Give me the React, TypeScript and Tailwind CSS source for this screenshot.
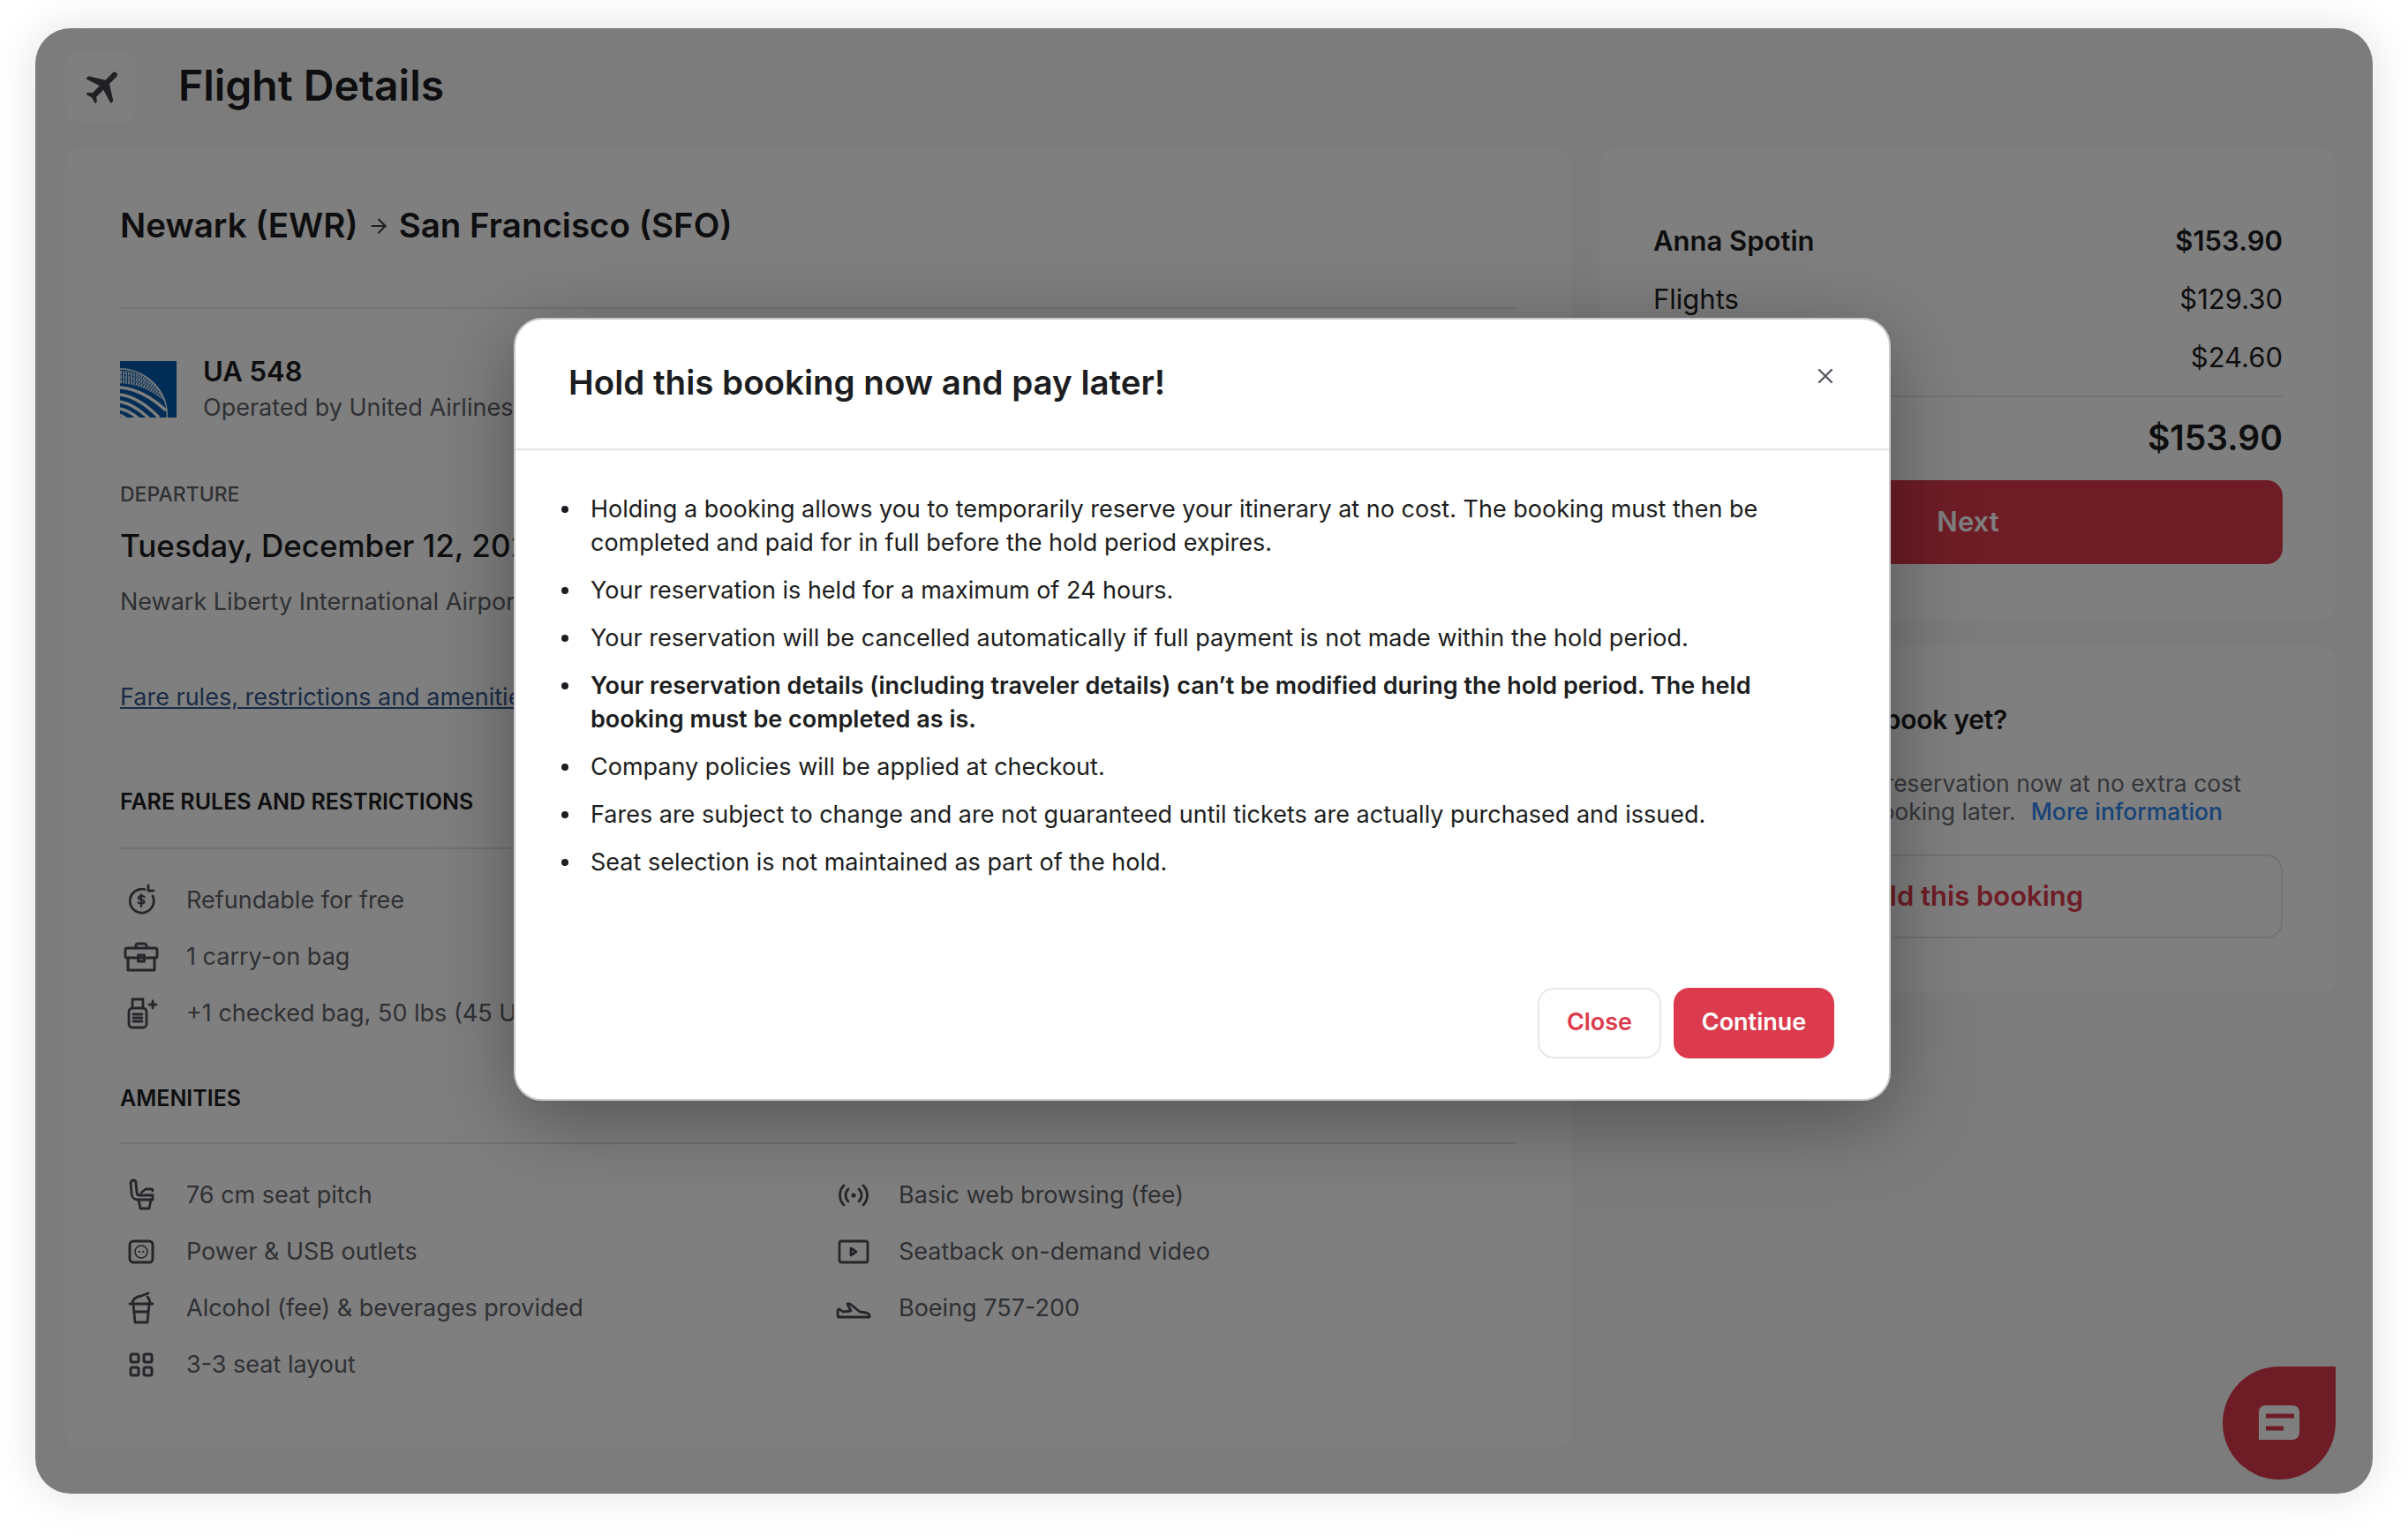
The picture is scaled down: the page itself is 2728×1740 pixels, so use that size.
import React from 'react';
import { ArrowRight, X } from 'lucide-react';
import { MdFlight } from 'react-icons/md';

const iconProps = {
  width: 40,
  height: 40,
  viewBox: '0 0 40 40',
  fill: 'none',
  stroke: '#4a4d55',
  strokeWidth: 2.8,
  strokeLinecap: 'round' as const,
  strokeLinejoin: 'round' as const,
};

const RefundIcon = () => (
  <svg {...iconProps}>
    <path d="M24 7.500A13.500 13.500 0 1 0 33 15" />
    <path d="M28 3v6h6" />
    <path d="M23.500 16c-1-1.500-6-2-6.500.8-.4 3 7 1.700 6.500 5-.5 2.500-5.500 2.200-7 .5M20 13v14" strokeWidth={2.2} />
  </svg>
);

const BriefcaseIcon = () => (
  <svg {...iconProps} strokeWidth={3}>
    <path d="M14 10V7.500A2.500 2.500 0 0 1 16.500 5h7A2.500 2.500 0 0 1 26 7.500V10" />
    <rect x="2" y="10" width="36" height="11" rx="2" />
    <path d="M5 21v14h30V21" />
    <rect x="16.500" y="18" width="7" height="7" />
  </svg>
);

const CheckedBagIcon = () => (
  <svg {...iconProps}>
    <path d="M10 14V4h12v10" />
    <rect x="6" y="14" width="20" height="22" rx="4" />
    <path d="M11 21h10M11 25h10M11 29h10M33 6v8M29 10h8" />
  </svg>
);

const SeatIcon = () => (
  <svg {...iconProps}>
    <path d="M8 6c0-4 6-4 6 0l1 11c.2 2 1 3 3 3h14" />
    <path d="M8 6l1 12c.3 4 3 7 7 7h17v-5" />
    <path d="M20 17l5-4h6c1.500 0 2 1 2 2M17 25l2 10h10l2-10" />
  </svg>
);

const OutletIcon = () => (
  <svg {...iconProps} strokeWidth={3}>
    <rect x="7" y="8" width="26" height="24" rx="4" />
    <circle cx="20" cy="20" r="7" strokeWidth={1.600} />
    <path d="M17.500 20h.5M22 20h.5" strokeWidth={2} />
  </svg>
);

const CupIcon = () => (
  <svg {...iconProps}>
    <path d="M10 15c0-5 4-8 10-9l8-3" />
    <path d="M7 15h26M11 15l2 21h14l2-21M12 24h16M30 15c0-3-1-6-3-8" />
  </svg>
);

const GridIcon = () => (
  <svg {...iconProps} strokeWidth={3}>
    <rect x="8" y="8" width="9" height="9" rx="2" />
    <rect x="23" y="8" width="9" height="9" rx="2" />
    <rect x="8" y="23" width="9" height="9" rx="2" />
    <rect x="23" y="23" width="9" height="9" rx="2" />
  </svg>
);

const WifiIcon = () => (
  <svg {...iconProps}>
    <path d="M9 9c-6 6-6 16 0 22M31 9c6 6 6 16 0 22M14 13c-4 4-4 10 0 14M26 13c4 4 4 10 0 14" />
    <circle cx="20" cy="20" r="1.200" fill="#4a4d55" />
  </svg>
);

const VideoIcon = () => (
  <svg {...iconProps}>
    <rect x="4" y="8" width="32" height="24" rx="2.500" />
    <path d="M17 16v8l6-4z" />
  </svg>
);

const AircraftIcon = () => (
  <svg {...iconProps}>
    <path d="M2 24c0-2 1-3 2-3l4 3 9-1-4-8h3l11 9 7 1c2 .500 4 2 4 3.500v1.500H3c-1 0-1-2-1-6z" />
  </svg>
);

const UnitedLogo = () => (
  <svg width="64" height="64" viewBox="0 0 64 64" className="shrink-0">
    <defs>
      <clipPath id="globe">
        <path d="M0 8c30 0 56 26 54 56H0z" />
      </clipPath>
    </defs>
    <rect width="64" height="64" fill="#005aaa" />
    <g clipPath="url(#globe)" fill="none" stroke="#fff">
      <path d="M0 8c30 0 56 26 54 56" strokeWidth="3.500" strokeOpacity=".85" />
      <path d="M0 13Q28 14 46 32M0 18Q28 19 50 38M0 23Q28 24 52 44" strokeWidth="4.500" strokeOpacity=".8" strokeDasharray="2 1" />
      <path d="M0 30Q26 32 52 56M0 38Q22 41 44 64M0 46Q16 49 34 66M0 54Q10 56 22 66M0 61L8 66" strokeWidth="3.500" />
    </g>
  </svg>
);

const ChatIcon = () => (
  <svg width="50" height="44" viewBox="0 0 50 44">
    <path d="M10 2h30c5 0 8 3 8 8v22c0 5-3 9-8 9H2V10c0-5 3-8 8-8z" fill="#fff" />
    <path d="M10 14h32M10 28h20" stroke="#dc3a4c" strokeWidth="5" />
  </svg>
);

const InfoRow = ({ icon, label }: { icon: React.ReactNode; label: string }) => (
  <div className="flex h-[64px] items-center">
    <div className="flex w-[48px] justify-center">{icon}</div>
    <span className="ml-[27px] whitespace-nowrap text-[27px] text-[#5f6269]">{label}</span>
  </div>
);

const SectionTitle = ({ children }: { children: React.ReactNode }) => (
  <h3 className="border-b-2 border-[#e3e4e6] pb-[36px] text-[25px] leading-[32px] font-semibold text-[#1c1d20] uppercase">
    {children}
  </h3>
);

const PriceRow = ({ label, price, bold }: { label: string; price: string; bold?: boolean }) => (
  <div className={`flex h-[66px] items-center justify-between text-[31px] text-[#1c1d20] ${bold ? 'font-semibold' : ''}`}>
    <span>{label}</span>
    <span>{price}</span>
  </div>
);

const holdPoints = [
  { text: 'Holding a booking allows you to temporarily reserve your itinerary at no cost. The booking must then be completed and paid for in full before the hold period expires.' },
  { text: 'Your reservation is held for a maximum of 24 hours.' },
  { text: 'Your reservation will be cancelled automatically if full payment is not made within the hold period.' },
  { text: 'Your reservation details (including traveler details) can’t be modified during the hold period. The held booking must be completed as is.', bold: true },
  { text: 'Company policies will be applied at checkout.' },
  { text: 'Fares are subject to change and are not guaranteed until tickets are actually purchased and issued.' },
  { text: 'Seat selection is not maintained as part of the hold.' },
];

const HoldModal = () => (
  <div className="absolute top-[328px] left-[542px] flex h-[887px] w-[1560px] flex-col rounded-[32px] border-2 border-[#c9c9cd] bg-white shadow-[0_20px_90px_rgba(0,0,0,0.35)]">
    <div className="relative flex h-[148px] items-center border-b-2 border-[#e5e5e7] pb-[2px] pl-[60px]">
      <h2 className="text-[38.5px] font-semibold text-[#1c1d20]">Hold this booking now and pay later!</h2>
      <X size={28} strokeWidth={2} className="absolute top-[50px] right-[58px] text-[#55585f]" />
    </div>
    <ul className="flex flex-col gap-[16px] pt-[48px] pr-[80px] pl-[52px] text-[27px] leading-[38px] text-[#1c1d20]">
      {holdPoints.map((point) => (
        <li key={point.text} className={`flex gap-[25px] ${point.bold ? 'font-semibold' : ''}`}>
          <span className="mt-[15px] h-[8px] w-[8px] shrink-0 rounded-full bg-[#1c1d20]" />
          <span>{point.text}</span>
        </li>
      ))}
    </ul>
    <div className="mt-auto flex justify-end gap-[14px] pr-[62px] pb-[46px]">
      <button className="h-[80px] w-[140px] rounded-[18px] border-2 border-[#e8e8ea] pb-[2px] text-[27px] font-semibold text-[#db3b4d]">
        Close
      </button>
      <button className="h-[80px] w-[182px] rounded-[18px] bg-[#db3b4d] pb-[2px] text-[27px] font-semibold text-white">
        Continue
      </button>
    </div>
  </div>
);

export default function App() {
  return (
    <div className="h-[1740px] w-[2728px] bg-white pt-[32px] pl-[40px] font-['Inter',sans-serif]">
      <div className="relative h-[1660px] w-[2648px] rounded-[40px] bg-[#f8f8f9] pt-[26px] pr-[40px] pl-[34px] shadow-[0_0_50px_rgba(0,0,0,0.12)]">
        <header className="flex items-center gap-[48px]">
          <div className="flex h-[80px] w-[80px] items-center justify-center rounded-[16px] bg-white">
            <MdFlight size={50} className="ml-[8px] rotate-45 text-[#3f4248]" />
          </div>
          <h1 className="pb-[2px] text-[48px] font-semibold text-[#1c1d20]">Flight Details</h1>
        </header>

        <div className="mt-[30px] flex gap-[31px]">
          <section className="h-[1474px] w-[1706px] rounded-[20px] bg-white px-[62px] pt-[60px]">
            <div className="flex h-[56px] items-center text-[38.5px] font-semibold text-[#1c1d20]">
              Newark (EWR)
              <ArrowRight size={26} strokeWidth={2} className="mx-[10px] text-[#3f4248]" />
              San Francisco (SFO)
            </div>
            <div className="mt-[64px] border-t-2 border-[#e3e4e6]" />

            <div className="mt-[59px] flex gap-[30px]">
              <UnitedLogo />
              <div className="-mt-[4px]">
                <div className="text-[31px] leading-[32px] font-semibold text-[#1c1d20]">UA 548</div>
                <div className="mt-[8px] text-[27px] leading-[34px] text-[#5f6269]">Operated by United Airlines</div>
              </div>
            </div>

            <div className="mt-[66px] text-[23px] leading-[30px] font-medium text-[#5f6269]">DEPARTURE</div>
            <div className="mt-[21px] text-[35px] leading-[44px] font-medium text-[#1c1d20]">Tuesday, December 12, 2023</div>
            <div className="mt-[23px] text-[27px] leading-[38px] text-[#5f6269]">Newark Liberty International Airport (EWR)</div>

            <a className="mt-[70px] block text-[27px] leading-[38px] text-[#33598f] underline">
              Fare rules, restrictions and amenities
            </a>

            <div className="mt-[83px]">
              <SectionTitle>Fare rules and restrictions</SectionTitle>
              <div className="mt-[26px]">
                <InfoRow icon={<RefundIcon />} label="Refundable for free" />
                <InfoRow icon={<BriefcaseIcon />} label="1 carry-on bag" />
                <InfoRow icon={<CheckedBagIcon />} label="+1 checked bag, 50 lbs (45 USD)" />
              </div>
            </div>

            <div className="mt-[48px]">
              <h3 className="border-b-2 border-[#e3e4e6] pb-[34px] text-[25px] leading-[32px] font-semibold text-[#1c1d20] uppercase">
                Amenities
              </h3>
              <div className="mt-[26px] grid grid-cols-[807px_1fr]">
                <InfoRow icon={<SeatIcon />} label="76 cm seat pitch" />
                <InfoRow icon={<WifiIcon />} label="Basic web browsing (fee)" />
                <InfoRow icon={<OutletIcon />} label="Power & USB outlets" />
                <InfoRow icon={<VideoIcon />} label="Seatback on-demand video" />
                <InfoRow icon={<CupIcon />} label="Alcohol (fee) & beverages provided" />
                <InfoRow icon={<AircraftIcon />} label="Boeing 757-200" />
                <InfoRow icon={<GridIcon />} label="3-3 seat layout" />
              </div>
            </div>
          </section>

          <aside className="flex flex-1 flex-col gap-[30px]">
            <div className="h-[534px] rounded-[20px] bg-white px-[62px] pt-[72px]">
              <PriceRow label="Anna Spotin" price="$153.90" bold />
              <PriceRow label="Flights" price="$129.30" />
              <PriceRow label="Taxes and fees" price="$24.60" />
              <div className="mt-[10px] flex h-[96px] items-center justify-between border-t-2 border-[#e3e4e6] pb-[2px] text-[39px] font-semibold text-[#1c1d20]">
                <span>Total</span>
                <span>$153.90</span>
              </div>
              <button className="h-[95px] w-full rounded-[18px] bg-[#dc3a4c] text-[31px] font-semibold text-white">Next</button>
            </div>

            <div className="h-[393px] rounded-[20px] bg-white px-[62px] pt-[62px]">
              <h3 className="text-[30px] leading-[42px] font-semibold tracking-[-0.25px] text-[#1c1d20]">Not quite ready to book yet?</h3>
              <p className="mt-[35px] text-[26.5px] leading-[32px] text-[#6a6d74]">
                Place a hold on your reservation now at no extra cost
                <br />
                and complete your booking later.
                <span className="ml-[17px] font-medium text-[#2c86f0]">More information</span>
              </p>
              <button className="mt-[33px] h-[95px] w-full rounded-[18px] border-2 border-[#e3e4e6] text-[31px] font-semibold text-[#dc3a4c]">
                Hold this booking
              </button>
            </div>
          </aside>
        </div>

        <div className="absolute right-[42px] bottom-[16px] flex h-[128px] w-[128px] items-center justify-center rounded-full rounded-tr-[14px] bg-[#dc3a4c]">
          <ChatIcon />
        </div>

        <div className="absolute inset-0 rounded-[40px] bg-black/50" />
        <HoldModal />
      </div>
    </div>
  );
}
